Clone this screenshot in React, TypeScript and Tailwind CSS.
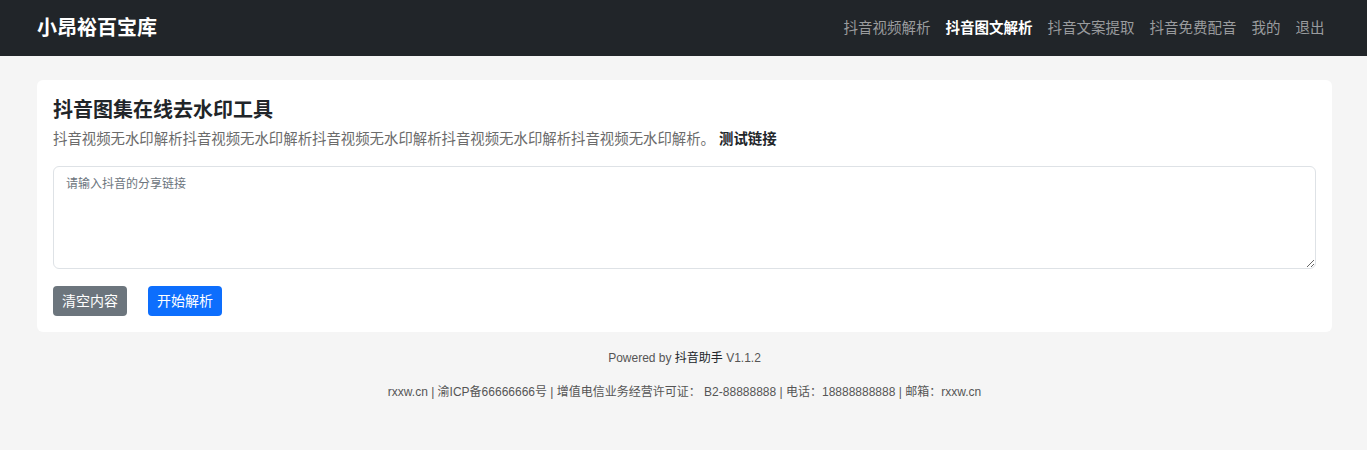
import { useState } from "react";

const navLinks = [
  { label: "抖音视频解析", active: false },
  { label: "抖音图文解析", active: true },
  { label: "抖音文案提取", active: false },
  { label: "抖音免费配音", active: false },
  { label: "我的", active: false },
  { label: "退出", active: false },
];

export default function App() {
  const [link, setLink] = useState("");

  return (
    <div
      className="min-h-screen bg-[#f5f5f5] text-[#212529]"
      style={{ fontFamily: '"Liberation Sans", "Noto Sans CJK SC", sans-serif' }}
    >
      <nav className="h-[56px] bg-[#212529] flex items-center justify-between pl-[37px] pr-[35px]">
        <a href="#" className="text-white text-[20px] font-bold leading-[28px]">小昂裕百宝库</a>
        <ul className="flex items-center">
          {navLinks.map((l) => (
            <li key={l.label}>
              <a
                href="#"
                className={`block px-[7.5px] text-[14.5px] leading-[21px] ${l.active ? "text-white font-bold" : "text-[#9a9c9e]"}`}
              >
                {l.label}
              </a>
            </li>
          ))}
        </ul>
      </nav>

      <main className="pl-[37px] pr-[35px] pt-[24px]">
        <div className="bg-white rounded-[6px] p-[16px]">
          <h1 className="text-[20px] font-bold leading-[28px] text-[#212529]">抖音图集在线去水印工具</h1>
          <p className="mt-[5px] text-[14.4px] leading-[21px] text-[#6b6b6b]">
            抖音视频无水印解析抖音视频无水印解析抖音视频无水印解析抖音视频无水印解析抖音视频无水印解析。
            <a href="#" className="ml-[4px] font-bold text-[#212529]">测试链接</a>
          </p>
          <textarea
            value={link}
            onChange={(e) => setLink(e.target.value)}
            placeholder="请输入抖音的分享链接"
            className="mt-[16px] block w-full h-[103px] border border-[#dee2e6] rounded-[6px] px-[12px] py-[8px] text-[12px] leading-[18px] outline-none placeholder:text-[#6c757d]"
          />
          <div className="mt-[17px] flex items-center gap-[21px]">
            <button
              onClick={() => setLink("")}
              className="h-[30px] px-[9px] rounded-[4px] bg-[#6c757d] text-white text-[14px]"
            >
              清空内容
            </button>
            <button className="h-[30px] px-[9px] rounded-[4px] bg-[#0d6efd] text-white text-[14px]">
              开始解析
            </button>
          </div>
        </div>

        <footer className="text-center text-[12px] leading-[18px] text-[#555]">
          <p className="mt-[17px]">
            Powered by <span className="text-[#212529]">抖音助手</span> V1.1.2
          </p>
          <p className="mt-[16px]">
            rxxw.cn | 渝ICP备66666666号 | 增值电信业务经营许可证： B2-88888888 | 电话：18888888888 | 邮箱：rxxw.cn
          </p>
        </footer>
      </main>
    </div>
  );
}
